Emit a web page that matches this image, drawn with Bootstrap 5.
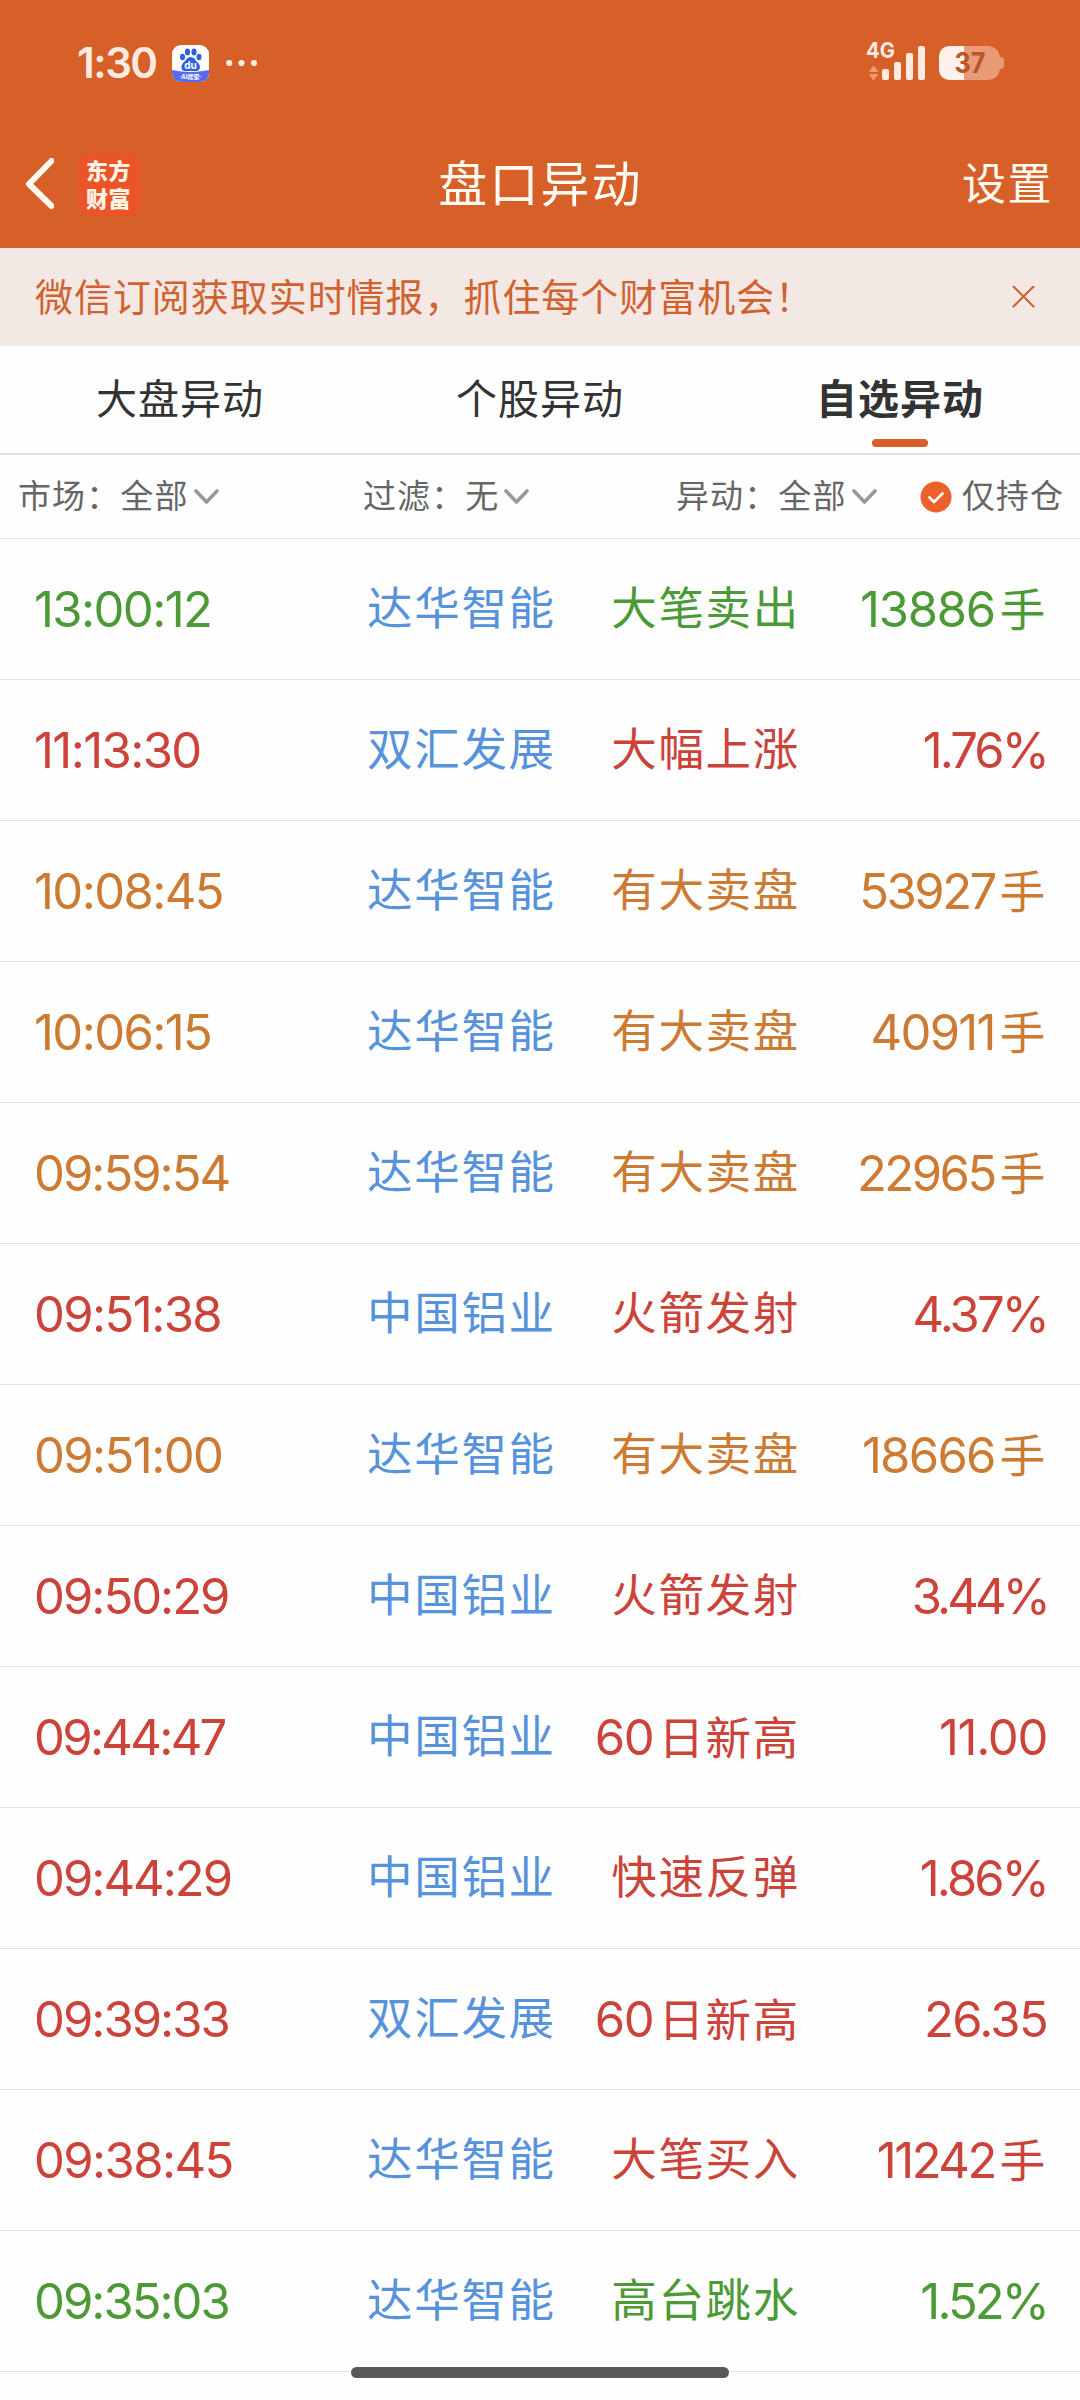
<!DOCTYPE html>
<html lang="zh-CN">
<head>
<meta charset="utf-8">
<meta name="viewport" content="width=device-width, initial-scale=1">
<title>盘口异动</title>
<link href="https://cdn.jsdelivr.net/npm/bootstrap@5.3.0/dist/css/bootstrap.min.css" rel="stylesheet">
<style>
body{width:1080px;height:2400px;overflow:hidden;background:#fefefe;font-family:Inter,"Noto Sans CJK SC",sans-serif;line-height:1;position:relative}
.topzone{background:#d75f28;height:248px;color:#fffaf2}
.statusbar{height:126px;padding:0 76px 0 77px;color:#feeae0}
.clock{font-size:42px;font-weight:600;letter-spacing:-1.5px;width:79px}
.statusbar svg{overflow:visible}
.titlebar{height:116px;padding:0 27px 0 24px}
.titlebar>div{flex:1 1 0}
.brandmark{width:63px;height:63px;border-radius:13px;background:#eb5328;color:#fff3e4;font:900 22px/28px "Noto Sans CJK SC",sans-serif;letter-spacing:.6px;margin-left:24px;padding:2px 0 0 8px}
.brandmark span{display:block;height:28px}
.pagetitle{font-size:49px;letter-spacing:2.1px;padding-left:4px}
.setlink{font-size:44px;letter-spacing:1.5px}
.notice{height:98px;background:#f3e8e3;color:#d1622f;padding:0 45px 0 35px;font-size:38px;letter-spacing:.95px}
.tabstrip{height:109px;border-bottom:2px solid #e0e0e0;font-size:41px;letter-spacing:1px;color:#333}
.tabstrip .tabitem{padding-bottom:1px}
.tabitem.on{font-weight:700}
.tabitem.on::after{content:"";position:absolute;left:50%;margin-left:-28px;bottom:6px;width:56px;height:8px;border-radius:4px;background:#d75f28}
.filters{height:84px;border-bottom:1px solid #e2e2e2;font-size:33px;letter-spacing:1.1px;color:#666;padding:0 16px 0 18px}
.filters svg{margin-left:5px}
.feed{height:141px;border-bottom:1px solid #e2e2e2;padding:0 33px 0 34px;font-size:45.5px;letter-spacing:1.7px}
.feed>*{white-space:nowrap}
.t{width:333px;font-size:49px;letter-spacing:-1.6px}
.t.snug{letter-spacing:-2px}
.t.tight{letter-spacing:-2.7px}
.n{width:190px;color:#5793dc}
.k{width:243px}
.v{width:247px}
.v b,.k b{font-weight:400;font-size:49px;letter-spacing:-1.3px}
.v b.snug{letter-spacing:-1.7px}
.v b.tight{letter-spacing:-2.5px}
.v b.pct{letter-spacing:-2.9px}
.v b.pct.tight{letter-spacing:-3.9px}
.v b.lot,.k b{margin-right:5px}
.g{color:#4b9a35}.r{color:#cc4339}.o{color:#cd7a32}
.homebar{left:351px;top:2367px;width:378px;height:11px;border-radius:6px;background:#585858}
</style>
</head>
<body>
<header class="topzone">
<div class="statusbar d-flex align-items-center">
<span class="clock">1:30</span>
<svg class="ms-3" width="37" height="37" viewBox="0 0 37 37"><defs><clipPath id="c"><rect width="37" height="37" rx="9"/></clipPath></defs><g clip-path="url(#c)"><path fill="#fff" d="M0 0h37v37H0z"/><path fill="#5a6af0" d="M0 25q18.500 4 37 0v12H0z"/><g fill="#2f62d8"><ellipse cx="10.500" cy="12" rx="2.500" ry="3.300"/><ellipse cx="15.500" cy="7" rx="2.600" ry="3.400"/><ellipse cx="22" cy="7" rx="2.600" ry="3.400"/><ellipse cx="27" cy="12" rx="2.500" ry="3.300"/><path d="M18.700 12c4 0 5 4 7.500 6 3 3 2 8-2 8H13c-4 0-4.500-5-2-8 2.500-2 4-6 7.700-6z"/></g><text x="18.500" y="23.500" font-size="10" font-weight="700" fill="#fff" text-anchor="middle">du</text><text x="18.500" y="34" font-size="6" font-weight="700" fill="#fff" text-anchor="middle">·AI搜索·</text></g></svg>
<svg style="margin-left:17px" width="32" height="8" viewBox="0 0 32 8" fill="#feeae0"><circle cx="3.200" cy="4" r="3.100"/><circle cx="15.500" cy="4" r="3.100"/><circle cx="28" cy="4" r="3.100"/></svg>
<svg class="ms-auto" width="138" height="54" viewBox="866 36 138 54" fill="#feeae0"><text x="866" y="57.500" font-size="22" font-weight="700" textLength="29" lengthAdjust="spacingAndGlyphs">4G</text><path fill="#ea9a74" d="M868.500 72l5-6.500 5 6.500zM868.500 74h10l-5 6.500z"/><rect x="882" y="69" width="7" height="11" rx="2"/><rect x="894" y="62" width="7" height="18" rx="2"/><rect x="906" y="53" width="7" height="27" rx="2"/><rect x="918" y="46" width="7" height="34" rx="2"/><rect x="939" y="46" width="61" height="34" rx="12" fill="#e99a76"/><path fill="#e99a76" d="M1000 57c3 0 4 1 4 3v6c0 2-1 3-4 3z"/><path fill="#fdf1ec" d="M964 46v34h-13c-8 0-12-4-12-12V58c0-8 4-12 12-12z"/><text x="954.500" y="73" font-size="28" font-weight="700" fill="#bd5627" textLength="31" lengthAdjust="spacingAndGlyphs">37</text></svg>
</div>
<div class="titlebar d-flex align-items-center">
<div class="d-flex align-items-center"><svg width="30" height="52" viewBox="0 0 30 52" fill="none" stroke="#fffaf2" stroke-width="6" stroke-linecap="round" stroke-linejoin="round"><path d="M27.500 3L5 26l22.500 22"/></svg><div class="brandmark"><span>东方</span><span>财富</span></div></div>
<h1 class="pagetitle fw-normal mb-0 lh-1">盘口异动</h1>
<div class="setlink text-end">设置</div>
</div>
</header>
<div class="notice d-flex align-items-center justify-content-between"><span>微信订阅获取实时情报，抓住每个财富机会！</span><svg width="23" height="23" viewBox="0 0 23 23" stroke="#d1622f" stroke-width="2.200" stroke-linecap="round"><path d="M1.500 .5l20 20M21.500 .5l-20 20"/></svg></div>
<nav class="tabstrip d-flex">
<div class="tabitem col-4 d-flex align-items-center justify-content-center">大盘异动</div>
<div class="tabitem col-4 d-flex align-items-center justify-content-center">个股异动</div>
<div class="tabitem on col-4 d-flex align-items-center justify-content-center position-relative">自选异动</div>
</nav>
<div class="filters d-flex align-items-center">
<div class="d-flex align-items-center" style="width:345px">市场：全部<svg width="25" height="16" viewBox="0 0 25 16" fill="none" stroke="#999" stroke-width="3.600" stroke-linecap="round" stroke-linejoin="round"><path d="M2 2l10.500 11L23 2"/></svg></div>
<div class="d-flex align-items-center" style="width:313px">过滤：无<svg width="25" height="16" viewBox="0 0 25 16" fill="none" stroke="#999" stroke-width="3.600" stroke-linecap="round" stroke-linejoin="round"><path d="M2 2l10.500 11L23 2"/></svg></div>
<div class="d-flex align-items-center">异动：全部<svg width="25" height="16" viewBox="0 0 25 16" fill="none" stroke="#999" stroke-width="3.600" stroke-linecap="round" stroke-linejoin="round"><path d="M2 2l10.500 11L23 2"/></svg></div>
<div class="d-flex align-items-center ms-auto"><svg class="ms-0 me-2" width="32" height="32" viewBox="0 0 32 32"><circle cx="16" cy="16" r="15.500" fill="#ed622b"/><path d="M9.500 16.500l4.500 4.500 8.500-8.500" fill="none" stroke="#fff" stroke-width="2.600" stroke-linecap="round" stroke-linejoin="round"/></svg><span style="margin-left:2px">仅持仓</span></div>
</div>
<main>
<div class="feed d-flex align-items-center g"><span class="t">13:00:12</span><span class="n">达华智能</span><span class="k text-end">大笔卖出</span><span class="v text-end"><b class="lot">13886</b>手</span></div>
<div class="feed d-flex align-items-center r"><span class="t">11:13:30</span><span class="n">双汇发展</span><span class="k text-end">大幅上涨</span><span class="v text-end"><b class="pct">1.76%</b></span></div>
<div class="feed d-flex align-items-center o"><span class="t">10:08:45</span><span class="n">达华智能</span><span class="k text-end">有大卖盘</span><span class="v text-end"><b class="lot tight">53927</b>手</span></div>
<div class="feed d-flex align-items-center o"><span class="t">10:06:15</span><span class="n">达华智能</span><span class="k text-end">有大卖盘</span><span class="v text-end"><b class="lot snug">40911</b>手</span></div>
<div class="feed d-flex align-items-center o"><span class="t snug">09:59:54</span><span class="n">达华智能</span><span class="k text-end">有大卖盘</span><span class="v text-end"><b class="lot tight">22965</b>手</span></div>
<div class="feed d-flex align-items-center r"><span class="t">09:51:38</span><span class="n">中国铝业</span><span class="k text-end">火箭发射</span><span class="v text-end"><b class="pct">4.37%</b></span></div>
<div class="feed d-flex align-items-center o"><span class="t">09:51:00</span><span class="n">达华智能</span><span class="k text-end">有大卖盘</span><span class="v text-end"><b class="lot snug">18666</b>手</span></div>
<div class="feed d-flex align-items-center r"><span class="t snug">09:50:29</span><span class="n">中国铝业</span><span class="k text-end">火箭发射</span><span class="v text-end"><b class="pct tight">3.44%</b></span></div>
<div class="feed d-flex align-items-center r"><span class="t tight">09:44:47</span><span class="n">中国铝业</span><span class="k text-end"><b>60</b>日新高</span><span class="v text-end"><b>11.00</b></span></div>
<div class="feed d-flex align-items-center r"><span class="t snug">09:44:29</span><span class="n">中国铝业</span><span class="k text-end">快速反弹</span><span class="v text-end"><b class="pct">1.86%</b></span></div>
<div class="feed d-flex align-items-center r"><span class="t snug">09:39:33</span><span class="n">双汇发展</span><span class="k text-end"><b>60</b>日新高</span><span class="v text-end"><b class="snug">26.35</b></span></div>
<div class="feed d-flex align-items-center r"><span class="t">09:38:45</span><span class="n">达华智能</span><span class="k text-end">大笔买入</span><span class="v text-end"><b class="lot tight">11242</b>手</span></div>
<div class="feed d-flex align-items-center g"><span class="t snug">09:35:03</span><span class="n">达华智能</span><span class="k text-end">高台跳水</span><span class="v text-end"><b class="pct">1.52%</b></span></div>
</main>
<div class="homebar position-absolute"></div>
<script src="https://cdn.jsdelivr.net/npm/bootstrap@5.3.0/dist/js/bootstrap.bundle.min.js"></script>
</body>
</html>
